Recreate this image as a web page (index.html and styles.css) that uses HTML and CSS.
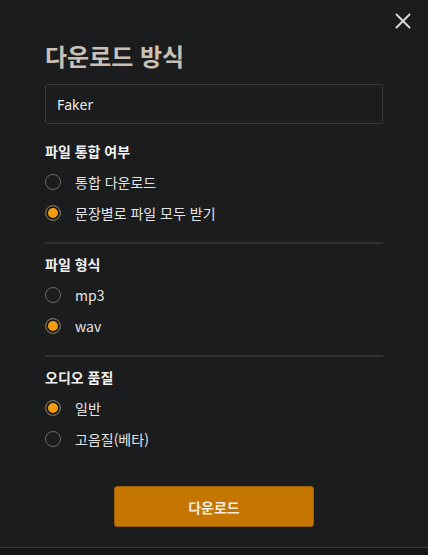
FILE: index.html
```html
<!DOCTYPE html>
<html lang="ko">
<head>
<meta charset="UTF-8" />
<title>다운로드 방식</title>
<link rel="stylesheet" href="styles.css">
</head>
<body>

<div class="modal">
  <button class="close" type="button" aria-label="닫기">
    <svg width="16" height="16" viewBox="0 0 16 16"><path d="M1.5 1.5 L14.5 14.5 M14.5 1.5 L1.5 14.5" stroke="#d6d6d6" stroke-width="2" stroke-linecap="round" /></svg>
  </button>

  <h2 class="title">다운로드 방식</h2>

  <input class="name" type="text" value="Faker" />

  <div class="group">
    <div class="group-label">파일 통합 여부</div>
    <label class="opt"><span class="dot"></span>통합 다운로드</label>
    <label class="opt"><span class="dot on"></span>문장별로 파일 모두 받기</label>
  </div>

  <hr class="sep" />

  <div class="group">
    <div class="group-label">파일 형식</div>
    <label class="opt"><span class="dot"></span>mp3</label>
    <label class="opt"><span class="dot on"></span>wav</label>
  </div>

  <hr class="sep" />

  <div class="group">
    <div class="group-label">오디오 품질</div>
    <label class="opt"><span class="dot on"></span>일반</label>
    <label class="opt"><span class="dot"></span>고음질(베타)</label>
  </div>

  <div class="actions">
    <button class="download" type="button">다운로드</button>
  </div>
</div>

</body>
</html>
```

FILE: styles.css
```css
body { margin: 0; background: #141517; font-family: "Noto Sans CJK KR", "Noto Sans", sans-serif; color: #e8e8e8; }
.modal { position: relative; height: 548px; box-sizing: border-box; padding: 0 45px; background: #1b1c1e; border-bottom: 1px solid #3a3c3e; }
.close { position: absolute; top: 13px; right: 17px; width: 16px; height: 16px; padding: 0; border: 0; background: none; cursor: pointer; }
.close svg { display: block; }
.title { margin: 0; padding-top: 41px; font-size: 24px; line-height: 30px; font-weight: 700; color: #c9c1b5; }
.name { display: block; width: 100%; box-sizing: border-box; height: 40px; margin-top: 13px; padding: 0 11px; background: #1b1c1e; border: 1px solid #3b3c3e; border-radius: 3px; color: #ececec; font-family: "Noto Sans", sans-serif; font-size: 14px; outline: none; }
.group { display: flex; flex-direction: column; }
.group:first-of-type { margin-top: 17px; }
.group-label { font-size: 14px; line-height: 20px; font-weight: 700; color: #f2f2f2; margin-bottom: 5px; }
.opt { display: flex; align-items: center; gap: 14px; height: 31px; font-size: 14px; color: #e4e4e4; cursor: pointer; }
.dot { width: 16px; height: 16px; box-sizing: border-box; border: 1.5px solid #6b6b6b; border-radius: 50%; flex: none; }
.dot.on { background: #f39c12; box-shadow: inset 0 0 0 2px #1b1c1e; }
.sep { margin: 14px 0 10px; border: 0; height: 2px; background: #2e3234; }
.actions { display: flex; justify-content: center; margin-top: 32px; }
.download { width: 200px; height: 41px; border: 1px solid #9a5e05; border-radius: 3px; background: #c47600; color: #f3ebe2; font-family: "Noto Sans CJK KR", sans-serif; font-size: 14px; font-weight: 700; cursor: pointer; }
```
